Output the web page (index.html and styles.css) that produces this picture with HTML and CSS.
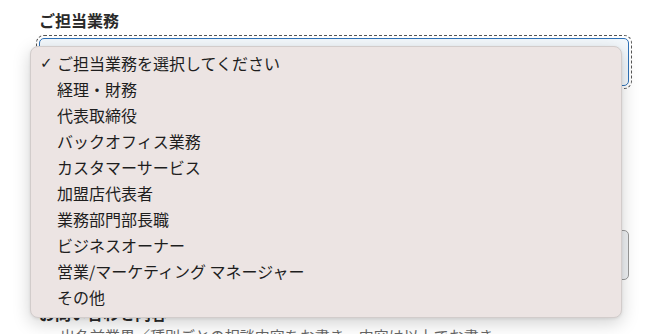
FILE: index.html
```html
<!DOCTYPE html>
<html lang="ja">
<head>
<meta charset="utf-8">
<link rel="stylesheet" href="styles.css">
</head>
<body>
<form class="form">
  <div class="field">
    <label class="label">ご担当業務</label>
    <div class="select focused"></div>
  </div>
  <div class="field hidden-field">
    <label class="label">ご担当者様</label>
    <p class="help">※ 以下の項目をご記入ください。</p>
    <p class="help">※ 必須項目です。</p>
  </div>
  <div class="field">
    <div class="input"></div>
  </div>
  <div class="field last-field">
    <label class="label">お問い合わせ内容</label>
    <p class="note">出名前業界／種別ごとの相談内容をお書き、内容は以上でお書き。</p>
  </div>
</form>

<div class="menu" role="listbox">
  <div class="option selected"><span class="check">✓</span>ご担当業務を選択してください</div>
  <div class="option">経理・財務</div>
  <div class="option">代表取締役</div>
  <div class="option">バックオフィス業務</div>
  <div class="option">カスタマーサービス</div>
  <div class="option">加盟店代表者</div>
  <div class="option">業務部門部長職</div>
  <div class="option">ビジネスオーナー</div>
  <div class="option">営業/マーケティング マネージャー</div>
  <div class="option">その他</div>
</div>
</body>
</html>
```

FILE: styles.css
```css
html, body {
  margin: 0;
  padding: 0;
  background: #ffffff;
}

body {
  font-family: "Noto Sans CJK JP", "Noto Sans", sans-serif;
  color: #222;
  width: 661px;
  height: 334px;
  overflow: hidden;
  position: relative;
}

.form {
  padding: 9px 32px 0 39px;
  display: flex;
  flex-direction: column;
}

.field {
  display: flex;
  flex-direction: column;
}

.label {
  font-size: 16px;
  font-weight: 700;
  line-height: 22px;
  color: #2a2a2a;
}

.select {
  margin-top: 7px;
  height: 46px;
  border: 1.5px solid #2f72b8;
  border-radius: 5px;
  background: #f3f8fc;
}

.focused {
  outline: 1px dashed #555;
  outline-offset: 2px;
}

.hidden-field {
  margin-top: 20px;
  height: 124px;
}

.help {
  margin: 6px 0 0;
  font-size: 14px;
  color: #666;
}

.input {
  height: 48px;
  border: 1px solid #9a9a9a;
  border-radius: 5px;
  background: #eef0f3;
}

.last-field {
  margin-top: 23px;
}

.last-field .label {
  line-height: 20px;
}

.note {
  margin: 4px 0 0 21px;
  font-size: 15px;
  line-height: 18px;
  color: #666;
  white-space: nowrap;
}

.menu {
  position: absolute;
  left: 30px;
  top: 46px;
  width: 590px;
  padding: 3px 0 7px;
  background: #ece4e3;
  border: 1px solid #d2cccb;
  border-radius: 8px;
  box-shadow: 0 5px 18px rgba(0, 0, 0, 0.18), 0 1px 3px rgba(0, 0, 0, 0.08);
}

.option {
  position: relative;
  height: 26px;
  line-height: 26px;
  padding-left: 26px;
  font-size: 16px;
  color: #1e1e1e;
  white-space: nowrap;
}

.check {
  position: absolute;
  left: 9px;
  top: 0;
  font-size: 15px;
  font-weight: 700;
  font-family: "DejaVu Sans", sans-serif;
}
```
